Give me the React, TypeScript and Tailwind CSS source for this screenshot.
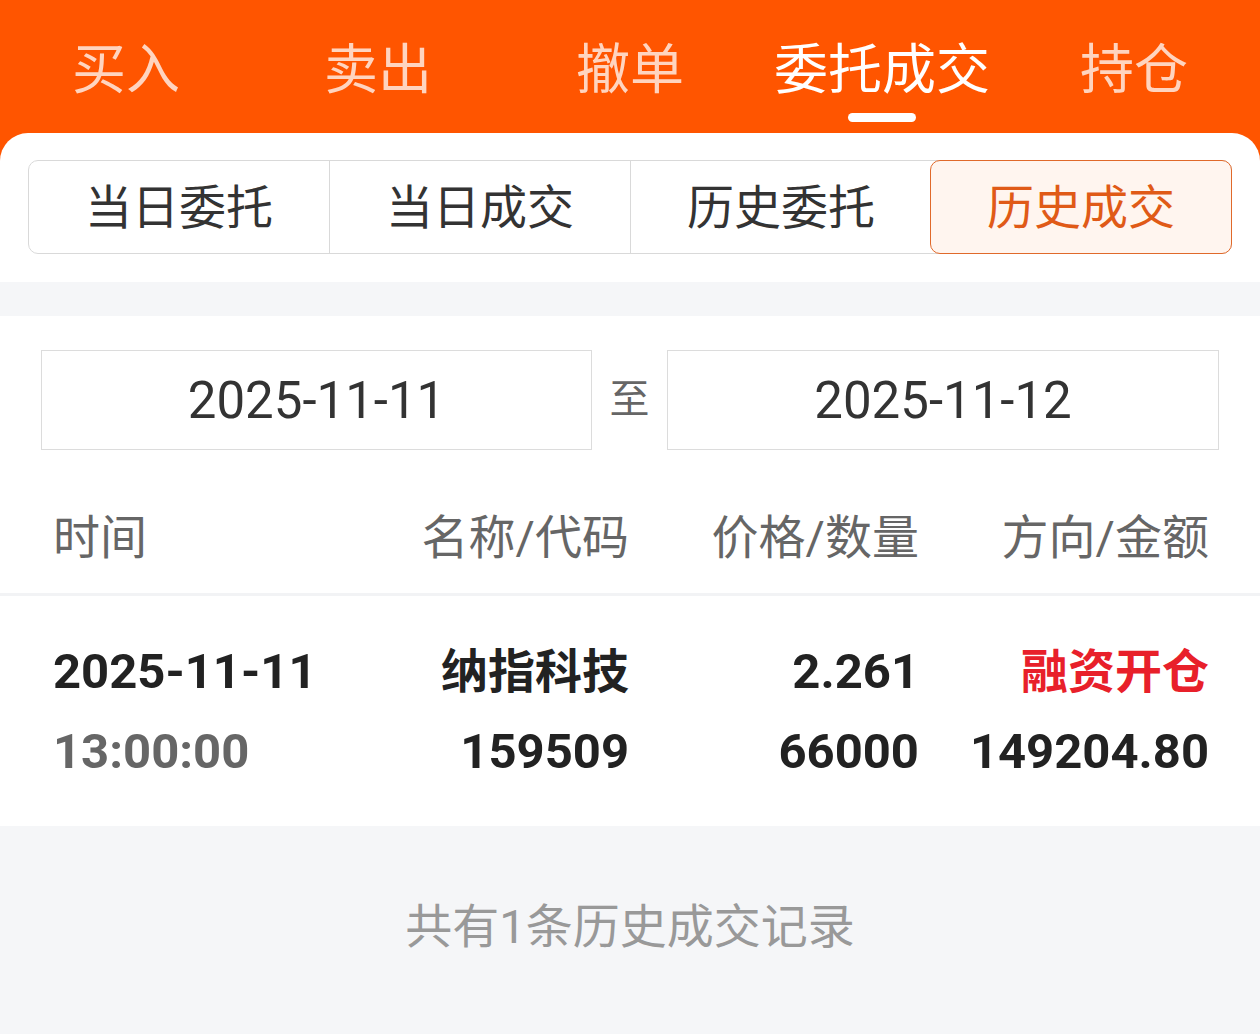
import React from "react";

const FONT = { fontFamily: 'Roboto, "Noto Sans CJK SC", "Noto Sans", sans-serif' };

export default function App() {
  const topTabs = ["买入", "卖出", "撤单", "委托成交", "持仓"];
  const subTabs = ["当日委托", "当日成交", "历史委托", "历史成交"];
  return (
    <div className="min-h-screen flex flex-col bg-[#ff5500]" style={FONT}>
      <div className="h-[133px] flex">
        {topTabs.map((t, i) => (
          <div key={t} className="relative flex-1 flex items-center justify-center">
            <span
              className={
                "text-[54px] leading-none mt-[8px] " +
                (i === 3 ? "text-white" : "text-[#ffd4bf]")
              }
            >
              {t}
            </span>
            {i === 3 && (
              <div className="absolute left-1/2 -translate-x-1/2 top-[113px] w-[68px] h-[9px] rounded-full bg-white" />
            )}
          </div>
        ))}
      </div>
      <div className="flex-1 flex flex-col bg-white rounded-t-[28px] overflow-hidden">
        <div className="pt-[27px] pb-[28px] px-[28px]">
          <div className="flex h-[94px] border border-[#d9d9d9] rounded-[10px]">
            {subTabs.map((t, i) => (
              <div
                key={t}
                className={
                  "flex-1 flex items-center justify-center text-[47px] " +
                  (i === 3
                    ? "bg-[#fff5ef] text-[#e05a17] border border-[#e0692a] rounded-[10px] -m-px"
                    : "text-[#333333] " + (i < 2 ? "border-r border-[#d9d9d9]" : ""))
                }
              >
                <span className="mt-[2px]">{t}</span>
              </div>
            ))}
          </div>
        </div>
        <div className="h-[34px] bg-[#f5f6f8]" />
        <div className="pt-[34px] pb-[34px] px-[41px] flex items-center">
          <div className="w-[551px] h-[100px] border border-[#dcdcdc] flex items-center justify-center text-[51px] text-[#333333]">
            <span className="mt-[2px]">2025-11-11</span>
          </div>
          <div className="flex-1 flex justify-center text-[40px] text-[#666666]">至</div>
          <div className="w-[552px] h-[100px] border border-[#dcdcdc] flex items-center justify-center text-[51px] text-[#333333]">
            <span className="mt-[2px]">2025-11-12</span>
          </div>
        </div>
        <div className="h-[109px] pl-[53px] pr-[51px] grid grid-cols-[286px_290px_290px_290px] items-center text-[47px] text-[#666666]">
          <div>时间</div>
          <div className="text-right">名称/代码</div>
          <div className="text-right">价格/数量</div>
          <div className="text-right">方向/金额</div>
        </div>
        <div className="h-[3px] bg-[#f2f3f5]" />
        <div className="pt-[36px] pb-[34px] pl-[53px] pr-[51px] grid grid-cols-[286px_290px_290px_290px] text-[49px] font-bold text-[#222222]">
          <div className="h-[80px] flex items-center">2025-11-11</div>
          <div className="h-[80px] flex items-center justify-end text-[47px]">纳指科技</div>
          <div className="h-[80px] flex items-center justify-end">2.261</div>
          <div className="h-[80px] flex items-center justify-end text-[47px] text-[#e8202a]">融资开仓</div>
          <div className="h-[80px] flex items-center text-[#666666]">13:00:00</div>
          <div className="h-[80px] flex items-center justify-end">159509</div>
          <div className="h-[80px] flex items-center justify-end">66000</div>
          <div className="h-[80px] flex items-center justify-end">149204.80</div>
        </div>
        <div className="flex-1 min-h-[208px] bg-[#f5f6f8] flex items-start justify-center pt-[76px]">
          <span className="text-[47px] leading-[50px] text-[#999999]">共有1条历史成交记录</span>
        </div>
      </div>
    </div>
  );
}
